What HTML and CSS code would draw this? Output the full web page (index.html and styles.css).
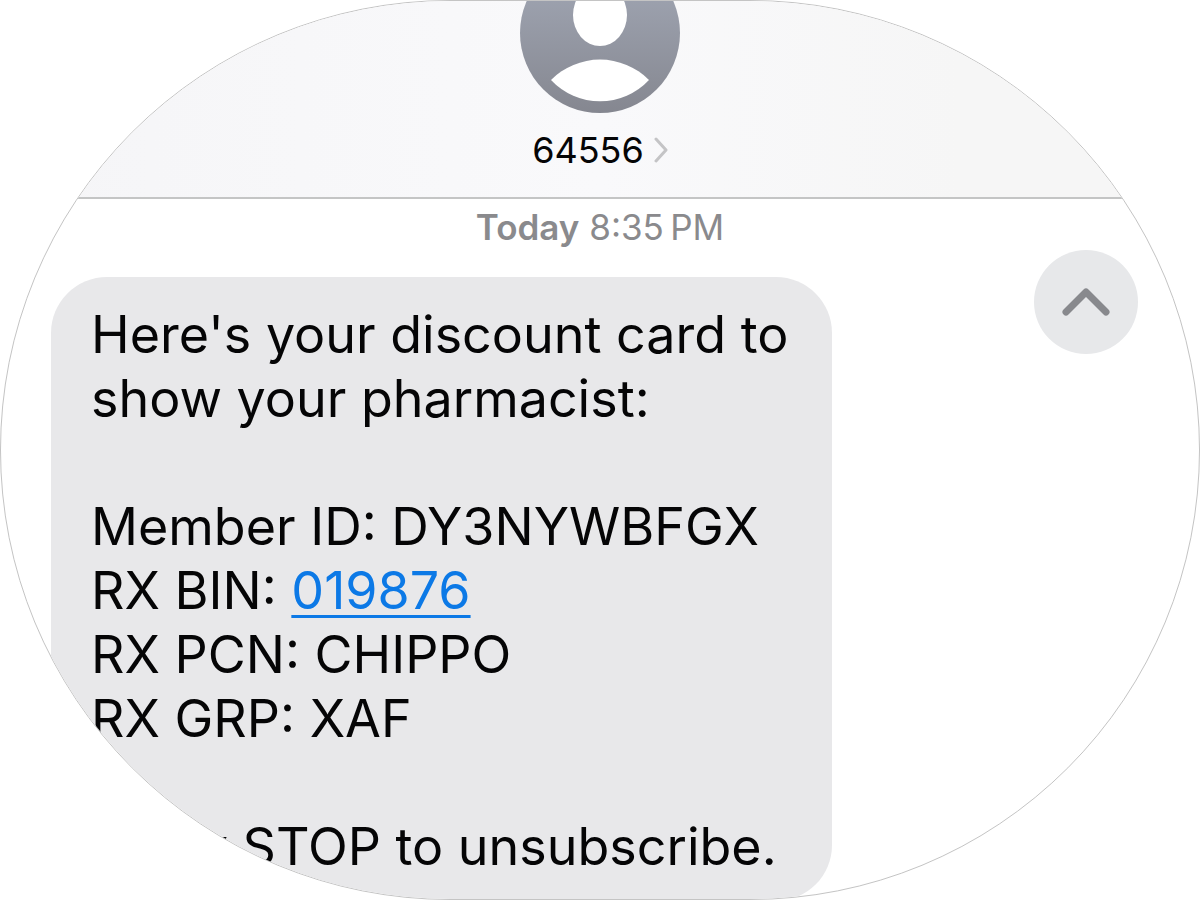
FILE: index.html
```html
<!DOCTYPE html>
<html lang="en">
  <head>
    <meta charset="UTF-8" />
    <meta name="viewport" content="width=device-width, initial-scale=1.0" />
    <title>64556</title>
    <link rel="stylesheet" href="styles.css">
  </head>
  <body>
    <main class="phone">
      <header class="contact">
        <svg class="avatar" viewBox="0 0 160 160" aria-hidden="true">
          <defs>
            <linearGradient id="avatarFill" x1="0" y1="0" x2="0" y2="1">
              <stop offset="0" stop-color="#a5abb9" />
              <stop offset="1" stop-color="#858790" />
            </linearGradient>
          </defs>
          <circle cx="80" cy="80" r="80" fill="url(#avatarFill)" />
          <ellipse cx="80" cy="62" rx="27" ry="31" fill="#fff" />
          <path d="M31 127A69 69 0 0 1 129 127A67 67 0 0 1 31 127Z" fill="#fff" />
        </svg>
        <a class="contact-link" href="#">
          64556
          <svg class="chevron" viewBox="0 0 14 26" aria-hidden="true">
            <path d="M2 2L12 13L2 24" />
          </svg>
        </a>
      </header>

      <section class="thread">
        <p class="timestamp"><strong>Today</strong> 8:35&#8201;PM</p>
        <div class="bubble">
          <p>Here's your discount card to<br />show your pharmacist:</p>
          <p>
            Member ID: DY3NYWBFGX<br />
            RX BIN: <a href="tel:019876">019876</a><br />
            RX PCN: CHIPPO<br />
            RX GRP: XAF
          </p>
          <p>Reply STOP to unsubscribe.</p>
        </div>
        <button class="scroll-up" type="button" aria-label="Scroll up">
          <svg viewBox="0 0 48 28" aria-hidden="true">
            <path d="M4 24L24 4L44 24" />
          </svg>
        </button>
      </section>
    </main>
  </body>
</html>
```
FILE: styles.css
```css
* {
  margin: 0;
  padding: 0;
  box-sizing: border-box;
}
body {
  background-color: #fff;
  font-family: Inter, "Liberation Sans", sans-serif;
  color: #050506;
}
.phone {
  height: 100vh;
  overflow: hidden;
  border: 1px solid #c4c4c4;
  border-radius: 50vh;
}
.contact {
  display: flex;
  flex-direction: column;
  align-items: center;
  justify-content: flex-end;
  gap: 15px;
  height: 198px;
  padding-bottom: 25px;
  border-bottom: 2px solid #c4c5c5;
  background: linear-gradient(90deg, #f5f5f7, #f9f9fb 50%, #f6f6f6 80%);
}
.avatar {
  flex-shrink: 0;
  width: 160px;
  height: 160px;
}
.contact-link {
  display: flex;
  align-items: center;
  gap: 10px;
  font-size: 36px;
  line-height: 44px;
  color: #050506;
  text-decoration: none;
}
.chevron {
  width: 14px;
  height: 26px;
  fill: none;
  stroke: #c4c4c6;
  stroke-width: 3;
  stroke-linecap: round;
  stroke-linejoin: round;
}
.thread {
  position: relative;
  padding: 6px 50px 0;
}
.timestamp {
  font-size: 35px;
  line-height: 44px;
  text-align: center;
  color: #8a8a8d;
}
.timestamp strong {
  font-weight: 600;
}
.bubble {
  width: fit-content;
  margin-top: 28px;
  padding: 26px 44px 22px 40px;
  border-radius: 56px;
  background-color: #e8e8ea;
  font-size: 52px;
  line-height: 64px;
}
.bubble p + p {
  margin-top: 64px;
}
.bubble a {
  color: #0c79e6;
  text-decoration-thickness: 3px;
  text-underline-offset: 6px;
}
.scroll-up {
  position: absolute;
  top: 51px;
  right: 61px;
  display: flex;
  align-items: center;
  justify-content: center;
  width: 104px;
  height: 104px;
  border: none;
  border-radius: 50%;
  background-color: #e7e8ea;
  cursor: pointer;
}
.scroll-up svg {
  width: 48px;
  height: 28px;
  fill: none;
  stroke: #88898d;
  stroke-width: 7;
  stroke-linecap: round;
  stroke-linejoin: round;
}
```
